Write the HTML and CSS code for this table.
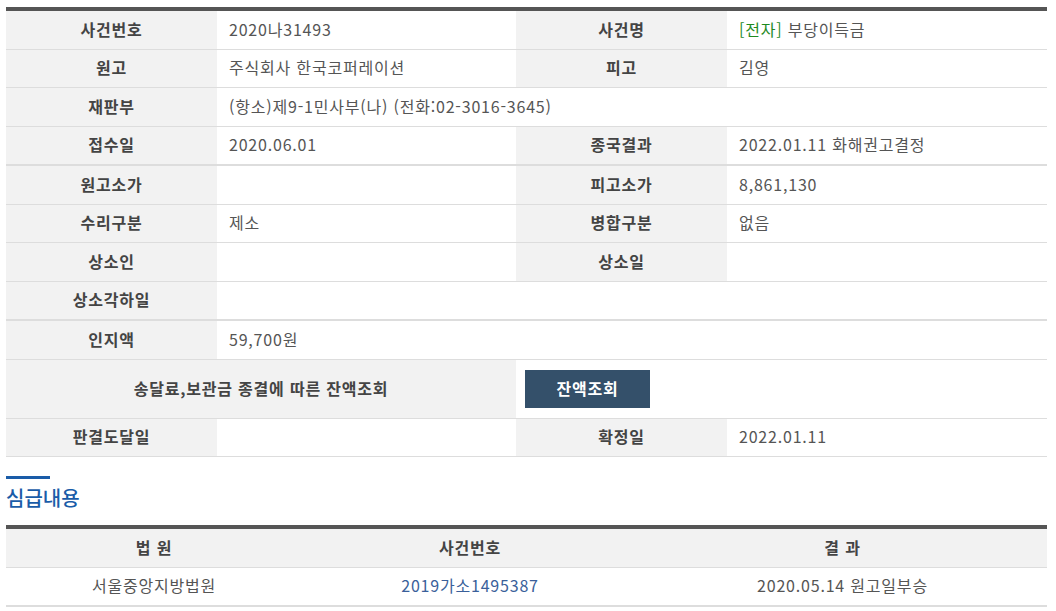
FILE: index.html
```html
<!DOCTYPE html>
<html lang="ko">
<head>
<meta charset="utf-8">
<link rel="stylesheet" href="styles.css">
</head>
<body>
<div class="page">
  <table class="info">
    <colgroup>
      <col class="c-lab"><col class="c-val"><col class="c-lab"><col class="c-val2">
    </colgroup>
    <tbody>
      <tr><th>사건번호</th><td>2020나31493</td><th>사건명</th><td><span class="tag">[전자]</span> 부당이득금</td></tr>
      <tr><th>원고</th><td>주식회사 한국코퍼레이션</td><th>피고</th><td>김영</td></tr>
      <tr><th>재판부</th><td colspan="3">(항소)제9-1민사부(나) (전화:02-3016-3645)</td></tr>
      <tr class="thick"><th>접수일</th><td>2020.06.01</td><th>종국결과</th><td>2022.01.11 화해권고결정</td></tr>
      <tr><th>원고소가</th><td></td><th>피고소가</th><td>8,861,130</td></tr>
      <tr><th>수리구분</th><td>제소</td><th>병합구분</th><td>없음</td></tr>
      <tr><th>상소인</th><td></td><th>상소일</th><td></td></tr>
      <tr class="thick"><th>상소각하일</th><td colspan="3"></td></tr>
      <tr><th>인지액</th><td colspan="3">59,700원</td></tr>
      <tr class="tall"><th colspan="2">송달료,보관금 종결에 따른 잔액조회</th><td colspan="2" class="btn-cell"><button class="btn" type="button">잔액조회</button></td></tr>
      <tr><th>판결도달일</th><td></td><th>확정일</th><td>2022.01.11</td></tr>
    </tbody>
  </table>

  <div class="section">
    <div class="section-bar"></div>
    <h3 class="section-title">심급내용</h3>
  </div>

  <table class="list">
    <colgroup>
      <col class="l1"><col class="l2"><col class="l3">
    </colgroup>
    <thead>
      <tr><th>법 원</th><th>사건번호</th><th>결 과</th></tr>
    </thead>
    <tbody>
      <tr><td>서울중앙지방법원</td><td><a class="link" href="#">2019가소1495387</a></td><td>2020.05.14 원고일부승</td></tr>
    </tbody>
  </table>
</div>
</body>
</html>
```

FILE: styles.css
```css
html, body {
  margin: 0;
  padding: 0;
  background: #fff;
}
body {
  font-family: "Noto Sans CJK KR", "Noto Sans", sans-serif;
  font-size: 16px;
  letter-spacing: 0.8px;
  color: #555;
}
.page {
  padding: 7px 9px 0 6px;
  width: 1041px;
}
table {
  border-collapse: collapse;
  table-layout: fixed;
  width: 1041px;
}
.info {
  border-top: 4px solid #555;
}
.c-lab { width: 211px; }
.c-val { width: 299px; }
.c-val2 { width: 320px; }

.info th, .info td {
  height: 35.5px;
  padding: 0 12px 2px;
  border-bottom: 1px solid #ddd;
  line-height: 20px;
  vertical-align: middle;
}
.info th {
  background: #f2f2f2;
  color: #444;
  font-weight: 700;
  text-align: center;
}
.info td {
  text-align: left;
  color: #555;
  font-weight: 400;
}
.info tr.thick th, .info tr.thick td {
  border-bottom-width: 2px;
}
.info tr.tall th, .info tr.tall td {
  height: 56px;
}
.tag { color: #1f8a1f; }
.info td.btn-cell { padding: 0 12px 0 9px; height: 58px; }
.btn {
  width: 125px;
  height: 38px;
  border: 0;
  background: #34506a;
  color: #fff;
  font-family: inherit;
  font-size: 16px;
  letter-spacing: 0.8px;
  font-weight: 700;
  padding: 0 0 2px;
  display: block;
}

.section {
  padding-top: 19px;
  height: 49px;
}
.section-bar {
  width: 44px;
  height: 3px;
  background: #1a5ca8;
}
.section-title {
  margin: 7px 0 0 0;
  font-size: 20px;
  letter-spacing: 0;
  line-height: 24px;
  font-weight: 500;
  color: #1a5ca8;
}

.list {
  border-top: 4px solid #555;
}
.l1 { width: 296px; }
.l2 { width: 336px; }
.list th, .list td {
  height: 35.5px;
  padding: 0 0 2px;
  text-align: center;
  vertical-align: middle;
  line-height: 20px;
}
.list th {
  background: #f2f2f2;
  color: #444;
  font-weight: 700;
  border-bottom: 1px solid #ddd;
}
.list td {
  color: #555;
  border-bottom: 2px solid #ddd;
}
.link {
  color: #3a5f9a;
  text-decoration: none;
}
```
